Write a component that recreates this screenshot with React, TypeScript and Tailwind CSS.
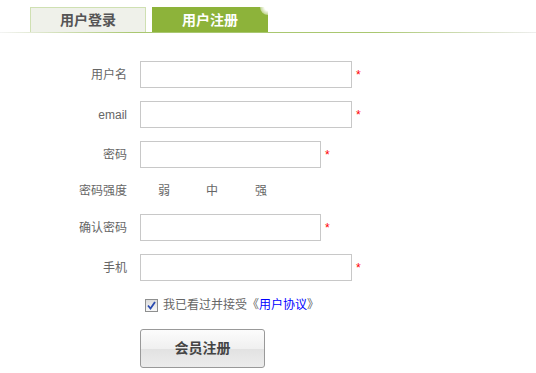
import React from 'react';

const font = { fontFamily: '"Liberation Sans", "Noto Sans CJK SC", sans-serif' };

const Row: React.FC<{ label: string; wide?: boolean; type?: string }> = ({ label, wide = true, type = 'text' }) => (
  <div className="flex items-center h-[27px]">
    <label className="w-[127px] text-right text-[12px] text-[#666]">{label}</label>
    <input
      type={type}
      className={`ml-[13px] h-[27px] border border-[#c8c8c8] bg-white outline-none ${wide ? 'w-[212px]' : 'w-[181px]'}`}
    />
    <span className="ml-[4px] text-[12px] text-[#f00] leading-none">*</span>
  </div>
);

export default function App() {
  return (
    <div className="w-[536px] h-[373px] bg-white" style={font}>
      <div className="relative flex h-[33px] pt-[7px] pl-[30px] gap-[6px]">
        <div className="w-[116px] h-[26px] border border-b-0 border-[#cfe0b2] bg-[#eff1ea] flex items-center justify-center text-[14px] font-bold text-[#555]">
          用户登录
        </div>
        <div className="relative w-[116px] h-[26px] bg-[#8db33a] flex items-center justify-center text-[14px] font-bold text-white overflow-hidden">
          用户注册
          <div className="absolute -top-[8px] -right-[8px] w-[16px] h-[16px] rounded-full bg-[radial-gradient(circle,#ffffff_30%,rgba(255,255,255,0)_100%)]" />
        </div>
        <div className="absolute left-0 right-0 bottom-0 h-[1px] bg-[linear-gradient(to_right,#f4f4f4_0%,#a9c770_25%,#a9c770_70%,#eeeeee_100%)]" />
      </div>

      <div className="flex flex-col gap-[13px] pt-[28px]">
        <Row label="用户名" />
        <Row label="email" />
        <Row label="密码" wide={false} type="password" />
        <div className="flex items-center h-[20px]">
          <span className="w-[127px] text-right text-[12px] text-[#666]">密码强度</span>
          <div className="flex text-[12px] text-[#666] ml-[31px]">
            <span className="w-[48px]">弱</span>
            <span className="w-[49px]">中</span>
            <span>强</span>
          </div>
        </div>
        <Row label="确认密码" wide={false} type="password" />
        <Row label="手机" />
      </div>

      <div className="flex items-center ml-[145px] mt-[17px] h-[14px]">
        <span className="flex items-center justify-center w-[13px] h-[13px] border border-[#8e8f8f] bg-[linear-gradient(to_bottom,#dcdcdc,#f8f8f8)]">
          <svg width="9" height="9" viewBox="0 0 9 9">
            <path d="M1 4.5 L3.5 7.5 L8 1" fill="none" stroke="#2a4bb0" strokeWidth="1.8" />
          </svg>
        </span>
        <span className="ml-[5px] text-[12px] text-[#666]">
          我已看过并接受《<a className="text-[#00f]">用户协议</a>》
        </span>
      </div>

      <button className="ml-[140px] mt-[17px] w-[125px] h-[39px] rounded-[3px] border border-[#999] bg-[linear-gradient(to_bottom,#fcfcfc_0%,#f0f0f0_50%,#e2e2e2_51%,#ececec_100%)] text-[14px] font-bold text-[#444]">
        会员注册
      </button>
    </div>
  );
}
